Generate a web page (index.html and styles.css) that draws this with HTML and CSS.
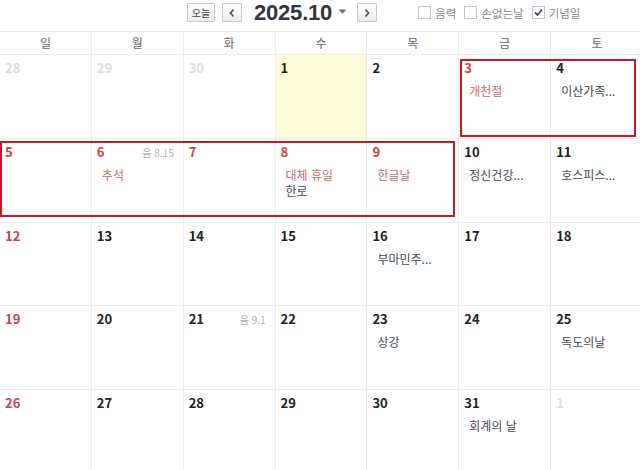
FILE: index.html
```html
<!DOCTYPE html>
<html lang="ko">
<head>
<meta charset="utf-8">
<title>2025.10</title>
<link rel="stylesheet" href="styles.css">
</head>
<body>
<div class="toolbar">
  <button class="btn today">오늘</button>
  <button class="btn arrow"><svg width="8" height="10" viewBox="0 0 8 10"><path d="M5.5 1.5 L2.5 5 L5.5 8.5" fill="none" stroke="#555" stroke-width="1.8"/></svg></button>
  <div class="title">2025.10</div>
  <svg class="caret" width="9" height="6" viewBox="0 0 9 6"><path d="M0.5 0.5 H8.5 L4.5 5 Z" fill="#777"/></svg>
  <button class="btn arrow next"><svg width="8" height="10" viewBox="0 0 8 10"><path d="M2.5 1.5 L5.5 5 L2.5 8.5" fill="none" stroke="#555" stroke-width="1.8"/></svg></button>
  <label class="chk"><span class="box"></span>음력</label>
  <label class="chk"><span class="box"></span>손없는날</label>
  <label class="chk"><span class="box checked"><svg width="11" height="11" viewBox="0 0 11 11"><path d="M2 5.5 L4.5 8 L9 2.5" fill="none" stroke="#3b4a6b" stroke-width="1.8"/></svg></span>기념일</label>
</div>
<div class="calendar">
  <div class="weekdays">
    <div>일</div><div>월</div><div>화</div><div>수</div><div>목</div><div>금</div><div>토</div>
  </div>
  <div class="grid">
    <div class="cell"><div class="top"><span class="num other">28</span></div></div>
    <div class="cell"><div class="top"><span class="num other">29</span></div></div>
    <div class="cell"><div class="top"><span class="num other">30</span></div></div>
    <div class="cell today-cell"><div class="top"><span class="num">1</span></div></div>
    <div class="cell"><div class="top"><span class="num">2</span></div></div>
    <div class="cell"><div class="top"><span class="num red">3</span></div><div class="ev hol">개천절</div></div>
    <div class="cell last"><div class="top"><span class="num">4</span></div><div class="ev">이산가족...</div></div>

    <div class="cell"><div class="top"><span class="num red">5</span></div></div>
    <div class="cell"><div class="top"><span class="num red">6</span><span class="lunar">음 8.15</span></div><div class="ev hol">추석</div></div>
    <div class="cell"><div class="top"><span class="num red">7</span></div></div>
    <div class="cell"><div class="top"><span class="num red">8</span></div><div class="ev hol">대체 휴일</div><div class="ev">한로</div></div>
    <div class="cell"><div class="top"><span class="num red">9</span></div><div class="ev hol">한글날</div></div>
    <div class="cell"><div class="top"><span class="num">10</span></div><div class="ev">정신건강...</div></div>
    <div class="cell last"><div class="top"><span class="num">11</span></div><div class="ev">호스피스...</div></div>

    <div class="cell"><div class="top"><span class="num red">12</span></div></div>
    <div class="cell"><div class="top"><span class="num">13</span></div></div>
    <div class="cell"><div class="top"><span class="num">14</span></div></div>
    <div class="cell"><div class="top"><span class="num">15</span></div></div>
    <div class="cell"><div class="top"><span class="num">16</span></div><div class="ev">부마민주...</div></div>
    <div class="cell"><div class="top"><span class="num">17</span></div></div>
    <div class="cell last"><div class="top"><span class="num">18</span></div></div>

    <div class="cell"><div class="top"><span class="num red">19</span></div></div>
    <div class="cell"><div class="top"><span class="num">20</span></div></div>
    <div class="cell"><div class="top"><span class="num">21</span><span class="lunar">음 9.1</span></div></div>
    <div class="cell"><div class="top"><span class="num">22</span></div></div>
    <div class="cell"><div class="top"><span class="num">23</span></div><div class="ev">상강</div></div>
    <div class="cell"><div class="top"><span class="num">24</span></div></div>
    <div class="cell last"><div class="top"><span class="num">25</span></div><div class="ev">독도의날</div></div>

    <div class="cell"><div class="top"><span class="num red">26</span></div></div>
    <div class="cell"><div class="top"><span class="num">27</span></div></div>
    <div class="cell"><div class="top"><span class="num">28</span></div></div>
    <div class="cell"><div class="top"><span class="num">29</span></div></div>
    <div class="cell"><div class="top"><span class="num">30</span></div></div>
    <div class="cell"><div class="top"><span class="num">31</span></div><div class="ev">회계의 날</div></div>
    <div class="cell last"><div class="top"><span class="num other">1</span></div></div>
  </div>
  <div class="mark mark-a"></div>
  <div class="mark mark-b"></div>
</div>
</body>
</html>
```
FILE: styles.css
```css
html, body {
  margin: 0;
  padding: 0;
  background: #fff;
  width: 640px;
  height: 470px;
  overflow: hidden;
  font-family: "Noto Sans CJK KR", "Noto Sans", sans-serif;
}

.toolbar {
  height: 31px;
  display: flex;
  align-items: center;
  padding-left: 187px;
  box-sizing: border-box;
}

.btn {
  box-sizing: border-box;
  height: 19px;
  border: 1px solid #c9c9c9;
  background: linear-gradient(#ffffff, #ececec);
  border-radius: 1px;
  padding: 0;
  display: flex;
  align-items: center;
  justify-content: center;
  font-family: "Noto Sans CJK KR", sans-serif;
  color: #444;
  margin-top: -6px;
}

.btn.today {
  width: 28px;
  font-size: 10px;
  line-height: 1;
}

.btn.arrow {
  width: 20px;
  margin-left: 7px;
}

.btn.next {
  margin-left: 10px;
}

.title {
  font-family: "Liberation Sans", Arial, sans-serif;
  font-weight: bold;
  font-size: 22px;
  color: #34343f;
  margin-left: 12px;
  margin-top: -6px;
  letter-spacing: -0.2px;
}

.caret {
  margin-left: 6px;
  margin-top: -8px;
}

.chk {
  display: flex;
  align-items: center;
  font-size: 11.5px;
  color: #888;
  margin-top: -6px;
  margin-left: 8px;
}

.chk:first-of-type {
  margin-left: 41px;
}

.box {
  width: 13px;
  height: 13px;
  box-sizing: border-box;
  border: 1px solid #c4c4c4;
  background: #fff;
  margin-right: 4px;
  display: flex;
  align-items: center;
  justify-content: center;
}

.calendar {
  position: relative;
  width: 643px;
}

.weekdays {
  display: grid;
  grid-template-columns: repeat(7, 1fr);
  border-top: 1px solid #e4e4e4;
  border-bottom: 1px solid #ececec;
  height: 24px;
  box-sizing: border-box;
}

.weekdays div {
  border-right: 1px solid #ececec;
  text-align: center;
  font-size: 12px;
  line-height: 22px;
  color: #666;
}

.weekdays div:last-child {
  border-right: none;
}

.grid {
  display: grid;
  grid-template-columns: repeat(7, 1fr);
  grid-auto-rows: 83.75px;
}

.cell {
  border-right: 1px solid #ececec;
  border-bottom: 1px solid #ececec;
  padding: 3px 9px 0 5px;
  box-sizing: border-box;
  overflow: hidden;
}

.cell.last {
  border-right: none;
}

.today-cell {
  background: #fffcd7;
}

.top {
  display: flex;
  justify-content: space-between;
  align-items: baseline;
  height: 20px;
}

.num {
  font-family: "Noto Sans CJK KR", sans-serif;
  font-weight: bold;
  font-size: 13px;
  color: #222;
}

.num.red {
  color: #c2454d;
}

.num.other {
  color: #dcdcdc;
}

.lunar {
  font-size: 10px;
  color: #b0b0b0;
}

.ev {
  font-size: 12px;
  line-height: 16px;
  color: #3e4a58;
  padding-left: 5px;
  white-space: nowrap;
}

.top + .ev {
  margin-top: 5px;
}

.ev.hol {
  color: #c46a6c;
}

.mark {
  position: absolute;
  border: 2px solid #c41a22;
  box-sizing: border-box;
}

.mark-a {
  left: 460px;
  top: 28px;
  width: 176px;
  height: 78px;
}

.mark-b {
  left: 0;
  top: 110px;
  width: 455px;
  height: 76px;
}
```
